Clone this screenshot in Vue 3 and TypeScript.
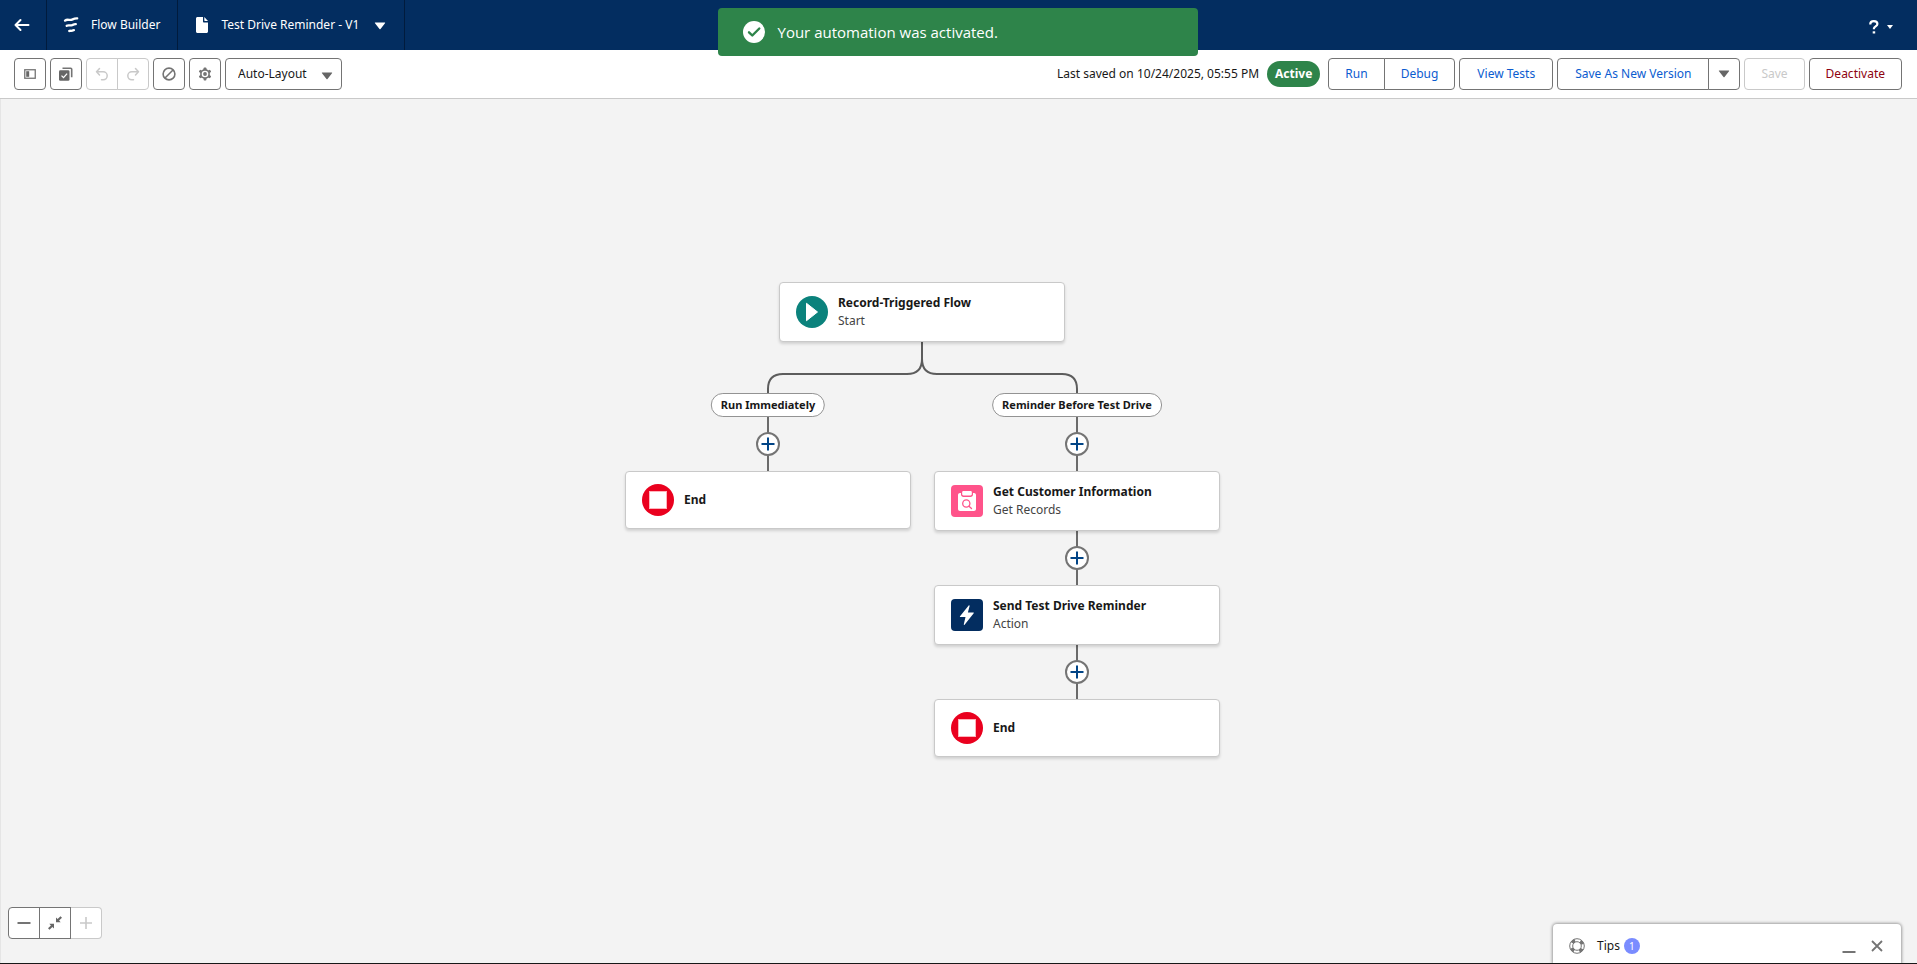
<script setup lang="ts">
import { ref } from 'vue'

type NodeKind = 'start' | 'end' | 'get' | 'action'

interface FlowNode {
  id: string
  kind: NodeKind
  title: string
  detail?: string
  x: number
  y: number
}

interface Point {
  x: number
  y: number
}

const layout = ref('Auto-Layout')

// Positions are measured from the centre line of the start element.
const nodes: FlowNode[] = [
  { id: 'start', kind: 'start', title: 'Record-Triggered Flow', detail: 'Start', x: 0, y: 0 },
  { id: 'end-left', kind: 'end', title: 'End', x: -154, y: 189 },
  { id: 'get', kind: 'get', title: 'Get Customer Information', detail: 'Get Records', x: 155, y: 189 },
  { id: 'send', kind: 'action', title: 'Send Test Drive Reminder', detail: 'Action', x: 155, y: 303 },
  { id: 'end-right', kind: 'end', title: 'End', x: 155, y: 417 },
]

const paths: (Point & { label: string })[] = [
  { label: 'Run Immediately', x: -154, y: 111 },
  { label: 'Reminder Before Test Drive', x: 155, y: 111 },
]

const adders: Point[] = [
  { x: -154, y: 162 },
  { x: 155, y: 162 },
  { x: 155, y: 276 },
  { x: 155, y: 390 },
]

const place = (p: Point) => ({ left: `${p.x}px`, top: `${p.y}px` })
</script>

<template>
  <div class="builder">
    <header class="topbar">
      <a class="back" href="#" aria-label="Back">
        <svg width="16" height="14" viewBox="0 0 16 14" fill="none" stroke="#fff" stroke-width="2" stroke-linecap="round" stroke-linejoin="round">
          <path d="M14.500 7H1.500M6.500 2L1.500 7l5 5" />
        </svg>
      </a>
      <div class="brand">
        <svg width="16" height="16" viewBox="0 0 16 16" fill="none" stroke="#fff" stroke-linecap="round">
          <path d="M2 3.600C4.500 1.600 6.500 3.700 9 2.600c1.800-.8 3.500-1.300 5.200-1.200" stroke-width="2.300" />
          <path d="M3.700 8.800c2-1.300 3.400.3 5.300-.6 1.400-.6 2.500-1.100 3.800-1" stroke-width="2.300" />
          <path d="M6.200 14c1.100-.7 2 .2 3.100-.4.600-.3 1-.4 1.600-.4" stroke-width="2.300" />
        </svg>
        <span>Flow Builder</span>
      </div>
      <button class="flow-title" type="button">
        <svg width="12" height="16" viewBox="0 0 12 16" fill="#fff">
          <path d="M1.500 0H7v4.500c0 .6.400 1 1 1h4v9c0 .8-.7 1.500-1.500 1.500h-9C.7 16 0 15.300 0 14.500v-13C0 .7.700 0 1.500 0z" />
          <path d="M8.300 0L12 3.900H8.900c-.4 0-.6-.2-.6-.6z" />
        </svg>
        <span>Test Drive Reminder - V1</span>
        <svg class="title-caret" width="12" height="8" viewBox="0 0 12 8" fill="#fff"><path d="M1.300.5h9.400c.5 0 .6.500.3.800L6.500 7a.7.7 0 0 1-1 0L1 1.300C.7 1 .8.500 1.300.5z" /></svg>
      </button>
      <button class="help" type="button" aria-label="Help">
        <svg width="10" height="14" viewBox="0 0 10 14" fill="none" stroke="#fff" stroke-width="2.200">
          <path d="M1.300 4.400V3.900C1.300 2.200 2.800 1.100 4.800 1.100s3.600 1.100 3.600 2.800c0 2.500-3.500 2.400-3.500 4.800v.6" />
          <path d="M3.700 12.400h2.500" />
        </svg>
        <svg width="6" height="4" viewBox="0 0 6 4" fill="#fff"><path d="M0 0h6L3 4z" /></svg>
      </button>
    </header>

    <div class="toolbar">
      <button class="btn icon" type="button" aria-label="Toggle toolbox">
        <svg width="12" height="10" viewBox="0 0 12 10"><rect x=".75" y=".75" width="10.500" height="8.500" fill="#fff" stroke="#747474" stroke-width="1.300" /><path d="M2.200 2.200h3v5.600h-3z" fill="#666" /></svg>
      </button>
      <button class="btn icon" type="button" aria-label="Select elements">
        <svg width="14" height="14" viewBox="0 0 14 14"><path d="M3.500 1.200h8.200c.6 0 1 .4 1 1v8" fill="none" stroke="#747474" stroke-width="1.600" /><rect x="0" y="3.300" width="10.500" height="10.500" rx="1.300" fill="#666" /><path d="M2.500 8.600l2 2 3.600-4" fill="none" stroke="#fff" stroke-width="1.300" /></svg>
      </button>
      <div class="group">
        <button class="btn icon" type="button" disabled aria-label="Undo">
          <svg width="14" height="14" viewBox="0 0 14 14" fill="none" stroke="#c9c9c9" stroke-width="1.500" stroke-linecap="round" stroke-linejoin="round"><path d="M4.500 1.500L1.500 4.800l3 3.200M1.500 4.800h6.700a4 4 0 0 1 0 8H6.500" /></svg>
        </button>
        <button class="btn icon" type="button" disabled aria-label="Redo">
          <svg width="14" height="14" viewBox="0 0 14 14" fill="none" stroke="#c9c9c9" stroke-width="1.500" stroke-linecap="round" stroke-linejoin="round"><path d="M9.500 1.500l3 3.300-3 3.200M12.500 4.800H5.800a4 4 0 0 0 0 8h1.700" /></svg>
        </button>
      </div>
      <button class="btn icon" type="button" aria-label="Show errors">
        <svg width="14" height="14" viewBox="0 0 14 14" fill="none" stroke="#747474" stroke-width="1.600"><circle cx="7" cy="7" r="5.900" /><path d="M3 11L11 3" /></svg>
      </button>
      <button class="btn icon" type="button" aria-label="Settings">
        <svg width="14" height="14" viewBox="-7 -7 14 14">
          <g fill="#747474"><circle r="4.900" /><rect v-for="a in [0, 60, 120]" :key="a" x="-1.400" y="-6.500" width="2.800" height="13" rx=".8" :transform="`rotate(${a})`" /></g>
          <circle r="3.300" fill="#fff" /><circle r="1.900" fill="#747474" />
        </svg>
      </button>
      <label class="layout">
        <select v-model="layout" aria-label="Layout mode">
          <option>Auto-Layout</option>
          <option>Free-Form</option>
        </select>
        <svg class="layout-caret" width="12" height="8" viewBox="0 0 12 8" fill="#666"><path d="M1.300.5h9.400c.5 0 .6.500.3.800L6.500 7a.7.7 0 0 1-1 0L1 1.300C.7 1 .8.500 1.300.5z" /></svg>
      </label>

      <div class="actions">
        <span class="saved">Last saved on 10/24/2025, 05:55 PM</span>
        <span class="badge">Active</span>
        <div class="group">
          <button class="btn text" type="button">Run</button>
          <button class="btn text" type="button">Debug</button>
        </div>
        <button class="btn text wide" type="button">View Tests</button>
        <div class="group">
          <button class="btn text wide" type="button">Save As New Version</button>
          <button class="btn icon" type="button" aria-label="More save options">
            <svg width="12" height="8" viewBox="0 0 12 8" fill="#666"><path d="M1.300.5h9.400c.5 0 .6.500.3.800L6.500 7a.7.7 0 0 1-1 0L1 1.300C.7 1 .8.500 1.300.5z" /></svg>
          </button>
        </div>
        <button class="btn text" type="button" disabled>Save</button>
        <button class="btn text danger" type="button">Deactivate</button>
      </div>
    </div>

    <main class="canvas">
      <div class="diagram">
        <svg class="wires" width="320" height="420" viewBox="-160 0 320 420" fill="none" stroke-width="2">
          <g stroke="#5c5c5c">
            <path d="M0 60V77Q0 92-15 92H-139Q-154 92-154 107V112" />
            <path d="M0 60V77Q0 92 15 92H140Q155 92 155 107V112" />
          </g>
          <path d="M-154 134V190M155 134V190M155 248V304M155 362V418" stroke="#6a6a6a" />
        </svg>
        <span v-for="p in paths" :key="p.label" class="path-label" :style="place(p)">{{ p.label }}</span>
        <button v-for="(a, i) in adders" :key="i" class="adder" type="button" aria-label="Add element" :style="place(a)">
          <svg width="14" height="14" viewBox="0 0 14 14" stroke="#014486" stroke-width="2"><path d="M7 .5v13M.5 7h13" /></svg>
        </button>
        <article v-for="n in nodes" :key="n.id" class="node" :class="{ short: !n.detail }" :style="place(n)">
          <svg v-if="n.kind === 'start'" width="32" height="32" viewBox="0 0 32 32"><circle cx="16" cy="16" r="16" fill="#0b827c" /><path d="M10.500 7.300L21.500 16l-11 8.700z" fill="#fff" stroke="#fff" stroke-linejoin="round" /></svg>
          <svg v-else-if="n.kind === 'end'" width="32" height="32" viewBox="0 0 32 32"><circle cx="16" cy="16" r="16" fill="#ea001e" /><path d="M7 7h18v18H7z" fill="#ffb3bb" /><path d="M8 8h16v16H8z" fill="#fff" /></svg>
          <svg v-else-if="n.kind === 'get'" width="32" height="32" viewBox="0 0 32 32">
            <rect width="32" height="32" rx="4" fill="#ff538a" />
            <path d="M9 8h1v1.500c0 1.400 1 2.500 2.500 2.500h7c1.500 0 2.500-1.100 2.500-2.500V8h1c1.100 0 2 .9 2 2v14c0 1.100-.9 2-2 2H9c-1.100 0-2-.9-2-2V10c0-1.100.9-2 2-2z" fill="#fff" />
            <path d="M12.500 6h7c.8 0 1.300.5 1.300 1.200v2.100c0 .7-.5 1.200-1.300 1.200h-7c-.8 0-1.300-.5-1.300-1.200V7.200c0-.7.500-1.200 1.300-1.200z" fill="#fff" />
            <g fill="none" stroke="#ff538a" stroke-width="1.300" stroke-linecap="round"><circle cx="15.300" cy="18.500" r="3.600" /><path d="M18 21.200l2.500 2.300" /></g>
          </svg>
          <svg v-else width="32" height="32" viewBox="0 0 32 32"><rect width="32" height="32" rx="4" fill="#032d60" /><path d="M17.700 6.500L9 17.300c-.3.400-.1.800.4.800h5.100l-1.700 7.200c-.1.600.4.900.8.400l9.100-11.500c.3-.4.100-.8-.4-.8h-5.400l1.700-6.500c.1-.6-.5-.9-.9-.4z" fill="#fff" /></svg>
          <div class="node-text">
            <h2>{{ n.title }}</h2>
            <p v-if="n.detail">{{ n.detail }}</p>
          </div>
        </article>
      </div>
    </main>

    <div class="group zoom">
      <button class="btn icon" type="button" aria-label="Zoom out">
        <svg width="14" height="14" viewBox="0 0 14 14" stroke="#747474" stroke-width="2"><path d="M.5 7h13" /></svg>
      </button>
      <button class="btn icon" type="button" aria-label="Zoom to fit">
        <svg width="14" height="14" viewBox="0 0 14 14" fill="#666"><path d="M8 1.500v4.700h4.700l-1.600-1.600L14 1.800 12.500.3 9.600 3.100zM6 12.500V7.800H1.300l1.600 1.600L0 12.200l1.500 1.500 2.900-2.800z" /></svg>
      </button>
      <button class="btn icon" type="button" disabled aria-label="Zoom in">
        <svg width="14" height="14" viewBox="0 0 14 14" stroke="#c9c9c9" stroke-width="1.600"><path d="M7 1v12M1 7h12" /></svg>
      </button>
    </div>

    <aside class="tips">
      <svg width="16" height="16" viewBox="0 0 16 16" fill="none" stroke="#747474"><circle cx="8" cy="8" r="7.300" /><circle cx="8" cy="8" r="4.300" /><circle cx="8" cy="8" r="5.800" stroke-width="3" stroke-dasharray="3.600 5.510" stroke-dashoffset="-2.800" /></svg>
      <span class="tips-title">Tips</span>
      <span class="count">1</span>
      <button class="minimize" type="button" aria-label="Minimize">
        <svg width="14" height="14" viewBox="0 0 14 14" stroke="#747474" stroke-width="2"><path d="M.5 13h13" /></svg>
      </button>
      <button type="button" aria-label="Close">
        <svg width="12" height="12" viewBox="0 0 12 12" stroke="#747474" stroke-width="1.800"><path d="M1 1l10 10M11 1L1 11" /></svg>
      </button>
    </aside>

    <div class="toast" role="status">
      <svg width="22" height="22" viewBox="0 0 22 22"><circle cx="11" cy="11" r="11" fill="#fff" /><path d="M6 11.300l3.300 3.200 7-7" fill="none" stroke="#2e844a" stroke-width="2.400" stroke-linecap="round" stroke-linejoin="round" /></svg>
      <span>Your automation was activated.</span>
    </div>
  </div>
</template>

<style>
body {
  margin: 0;
}
</style>

<style scoped>
.builder {
  position: relative;
  display: flex;
  flex-direction: column;
  box-sizing: border-box;
  min-height: 100vh;
  overflow: hidden;
  border-bottom: 1px solid #181818;
  background: #f3f3f3;
  color: #181818;
  font: 12px/18px "Noto Sans", "Open Sans", sans-serif;
}
.builder * {
  box-sizing: border-box;
}
svg {
  display: block;
  flex: none;
}
button,
select {
  margin: 0;
  padding: 0;
  border: 0;
  background: none;
  color: inherit;
  font: inherit;
  cursor: pointer;
}
.topbar {
  display: flex;
  height: 50px;
  background: #032d60;
  color: #fff;
}
.back,
.brand,
.flow-title {
  display: flex;
  align-items: center;
  border-right: 1px solid #011b3d;
}
.back {
  padding: 0 16px 0 14px;
}
.brand {
  gap: 12px;
  padding: 0 17px 0 16px;
}
.flow-title {
  gap: 13px;
  padding: 0 18px;
}
.title-caret {
  margin: 2px 0 0 2px;
}
.help {
  display: flex;
  align-items: center;
  gap: 8px;
  margin-left: auto;
  padding: 4px 24px 0;
}
.toolbar {
  display: flex;
  align-items: center;
  gap: 4px;
  height: 49px;
  padding: 0 15px 0 14px;
  border-bottom: 1px solid #c9c9c9;
  background: #fff;
}
.btn {
  display: flex;
  align-items: center;
  justify-content: center;
  height: 32px;
  border: 1px solid #747474;
  border-radius: 4px;
  background: #fff;
  white-space: nowrap;
}
.btn.icon {
  width: 32px;
}
.btn.text {
  padding: 0 16px;
  color: #0b5cd0;
}
.btn.wide {
  padding: 0 17px;
}
.btn.danger {
  color: #8e030f;
}
.btn:disabled {
  border-color: #c9c9c9;
  color: #c9c9c9;
  cursor: default;
}
.group {
  display: flex;
}
.group .btn + .btn {
  margin-left: -1px;
  border-top-left-radius: 0;
  border-bottom-left-radius: 0;
}
.group .btn:not(:last-child) {
  border-top-right-radius: 0;
  border-bottom-right-radius: 0;
}
.group .btn:disabled:last-child:not(:nth-child(2)) {
  border-left: 0;
  margin-left: 0;
  width: 31px;
}
.layout {
  position: relative;
}
.layout select {
  display: block;
  width: 117px;
  height: 32px;
  padding: 0 28px 0 12px;
  border: 1px solid #747474;
  border-radius: 4px;
  background: #fff;
  appearance: none;
}
.layout-caret {
  position: absolute;
  top: 14px;
  right: 9px;
  pointer-events: none;
}
.actions {
  display: flex;
  align-items: center;
  gap: 4px;
  margin-left: auto;
}
.saved {
  margin-right: 4px;
}
.badge {
  margin-right: 4px;
  padding: 4px 8px;
  border-radius: 13px;
  background: #2e844a;
  color: #fff;
  font-weight: 700;
}
.canvas {
  flex: 1;
  border-left: 1px solid #e5e5e5;
}
.diagram {
  position: relative;
  width: 0;
  height: 475px;
  margin: 183px 0 0 calc(50% - 37px);
}
.wires {
  position: absolute;
  top: 0;
  left: -160px;
}
.node {
  position: absolute;
  display: flex;
  align-items: center;
  gap: 10px;
  width: 286px;
  height: 60px;
  padding: 0 16px;
  border: 1px solid #c9c9c9;
  border-radius: 4px;
  background: #fff;
  box-shadow: 0 2px 3px rgba(0, 0, 0, 0.14);
  transform: translateX(-50%);
}
.node.short {
  height: 58px;
}
h2,
p {
  margin: 0;
  font-size: 12px;
  line-height: 18px;
}
h2 {
  font-weight: 700;
}
p {
  color: #444;
}
.path-label {
  position: absolute;
  height: 24px;
  padding: 0 9px;
  border: 1px solid #939393;
  border-radius: 12px;
  background: #fff;
  font-size: 11px;
  font-weight: 700;
  line-height: 22px;
  white-space: nowrap;
  transform: translateX(-50%);
}
.adder {
  position: absolute;
  display: flex;
  align-items: center;
  justify-content: center;
  width: 24px;
  height: 24px;
  border: 2px solid #747474;
  border-radius: 50%;
  background: #fff;
  transform: translate(-50%, -50%);
}
.zoom {
  position: absolute;
  bottom: 24px;
  left: 8px;
}
.tips {
  position: absolute;
  right: 16px;
  bottom: 0;
  display: flex;
  align-items: center;
  width: 348px;
  height: 39px;
  padding: 4px 18px 0 16px;
  border-radius: 4px 4px 0 0;
  background: #fff;
  box-shadow: 0 0 3px 1px rgba(0, 0, 0, 0.35);
}
.tips-title {
  margin-left: 12px;
}
.count {
  width: 16px;
  height: 16px;
  margin-left: 4px;
  border-radius: 50%;
  background: #7a8cff;
  color: #fff;
  font-size: 10px;
  line-height: 16px;
  text-align: center;
}
.minimize {
  margin: 0 15px 0 auto;
}
.toast {
  position: absolute;
  top: 8px;
  left: calc(50% - 1px);
  display: flex;
  align-items: center;
  gap: 13px;
  width: 480px;
  height: 48px;
  padding: 0 25px;
  border-radius: 4px;
  background: #2e844a;
  color: #fff;
  font-family: "Open Sans", "Noto Sans", sans-serif;
  font-size: 15px;
  transform: translateX(-50%);
}
</style>
